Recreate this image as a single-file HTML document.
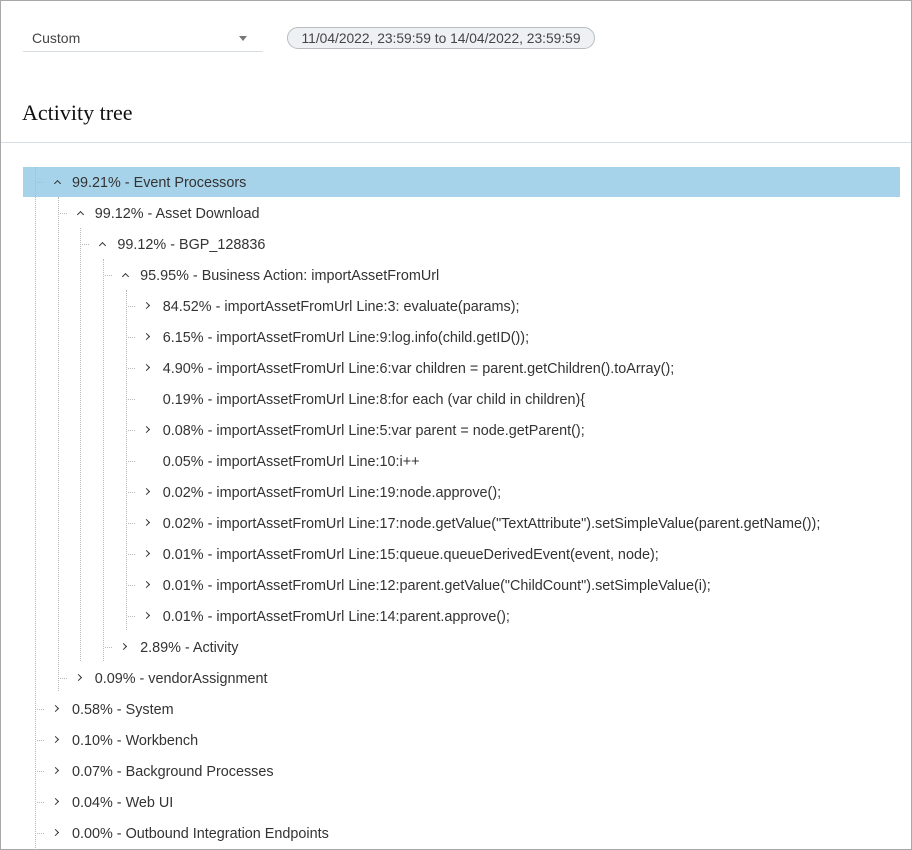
<!DOCTYPE html>
<html><head><meta charset="utf-8"><style>
html,body{margin:0;padding:0}
body{width:912px;height:850px;position:relative;overflow:hidden;background:#fff;font-family:"Liberation Sans",sans-serif;}
.frame{position:absolute;left:0;top:0;width:910px;height:848px;border:1px solid #a8a8a8;}
.sel{position:absolute;left:23px;top:31px;width:240px;height:20px;border-bottom:1px solid #d8dde2;}
.sel span{position:absolute;left:9px;top:-1px;font-size:14px;color:#444;}
.sel i{position:absolute;right:16px;top:5px;width:0;height:0;border-left:4px solid transparent;border-right:4px solid transparent;border-top:5px solid #777;}
.pill{position:absolute;left:287px;top:27px;width:306px;height:20px;border:1px solid #b8bcc0;border-radius:11px;background:#eef1f4;font-size:13.8px;color:#444;line-height:21px;text-align:center;white-space:nowrap;}
h1{position:absolute;left:22px;top:100px;margin:0;font-family:"Liberation Serif",serif;font-weight:normal;font-size:22px;color:#111;}
.hr{position:absolute;left:1px;right:1px;top:142px;height:1px;background:#d8dde2;}
.hl{position:absolute;left:23px;top:167px;width:877px;height:30px;background:#a6d3ea;}
.v{position:absolute;width:0;border-left:1px dotted #b8b8b8;}
.h{position:absolute;height:0;width:7px;border-top:1px dotted #b8b8b8;}
.r{position:absolute;font-size:14.4px;color:#333;white-space:nowrap;line-height:16px;}
.c{position:absolute;width:4px;height:4px;border-left:1.3px solid #333;border-top:1.3px solid #333;}
.up{transform:rotate(45deg);}
.rt{transform:rotate(135deg);}
</style></head><body>
<div class="frame"></div>
<div class="sel"><span>Custom</span><i></i></div>
<div class="pill">11/04/2022, 23:59:59 to 14/04/2022, 23:59:59</div>
<h1>Activity tree</h1>
<div class="hr"></div>
<div class="hl"></div>
<div class="v" style="left:35px;top:167px;height:683px"></div>
<div class="v" style="left:58px;top:197px;height:494px"></div>
<div class="v" style="left:80px;top:228px;height:433px"></div>
<div class="v" style="left:103px;top:259px;height:402px"></div>
<div class="v" style="left:126px;top:290px;height:340px"></div>
<div id="rows"></div>
<script>
var rows=[
[0,'u','99.21% - Event Processors'],
[1,'u','99.12% - Asset Download'],
[2,'u','99.12% - BGP_128836'],
[3,'u','95.95% - Business Action: importAssetFromUrl'],
[4,'r','84.52% - importAssetFromUrl Line:3: evaluate(params);'],
[4,'r','6.15% - importAssetFromUrl Line:9:log.info(child.getID());'],
[4,'r','4.90% - importAssetFromUrl Line:6:var children = parent.getChildren().toArray();'],
[4,'','0.19% - importAssetFromUrl Line:8:for each (var child in children){'],
[4,'r','0.08% - importAssetFromUrl Line:5:var parent = node.getParent();'],
[4,'','0.05% - importAssetFromUrl Line:10:i++'],
[4,'r','0.02% - importAssetFromUrl Line:19:node.approve();'],
[4,'r','0.02% - importAssetFromUrl Line:17:node.getValue("TextAttribute").setSimpleValue(parent.getName());'],
[4,'r','0.01% - importAssetFromUrl Line:15:queue.queueDerivedEvent(event, node);'],
[4,'r','0.01% - importAssetFromUrl Line:12:parent.getValue("ChildCount").setSimpleValue(i);'],
[4,'r','0.01% - importAssetFromUrl Line:14:parent.approve();'],
[3,'r','2.89% - Activity'],
[1,'r','0.09% - vendorAssignment'],
[0,'r','0.58% - System'],
[0,'r','0.10% - Workbench'],
[0,'r','0.07% - Background Processes'],
[0,'r','0.04% - Web UI'],
[0,'r','0.00% - Outbound Integration Endpoints']];
var h='';
rows.forEach(function(r,i){
 var cy=182+31*i, L=r[0], x0=35+22.7*L;
 h+='<div class="h" style="left:'+(x0+2)+'px;top:'+cy+'px"></div>';
 if(r[1]=='u') h+='<div class="c up" style="left:'+(x0+20)+'px;top:'+(cy-1)+'px"></div>';
 if(r[1]=='r') h+='<div class="c rt" style="left:'+(x0+18)+'px;top:'+(cy-3)+'px"></div>';
 h+='<div class="r" style="left:'+(x0+37)+'px;top:'+(cy-7)+'px">'+r[2].replace(/</g,'&lt;')+'</div>';
});
document.getElementById('rows').innerHTML=h;
</script>
</body></html>
